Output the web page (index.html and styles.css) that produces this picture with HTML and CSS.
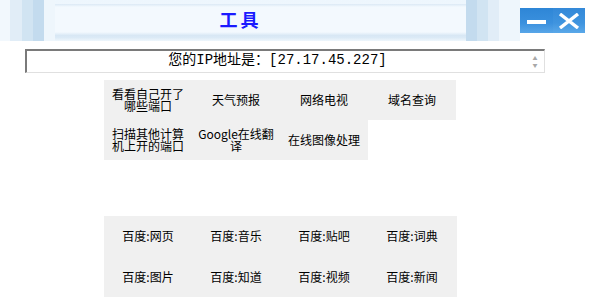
FILE: index.html
```html
<!DOCTYPE html>
<html lang="zh-CN">
<head>
  <meta charset="UTF-8" />
  <title>工具</title>
  <link rel="stylesheet" href="styles.css">
</head>
<body>
  <div class="top">
    <div class="title-bar">
      <div class="title-panel">工具</div>
    </div>
    <div class="win-btns">
      <span class="btn-min"><svg width="20" height="6" viewBox="0 0 20 6"><rect x="0" y="1" width="19" height="4" fill="#fff"/></svg></span>
      <span class="btn-close"><svg width="22" height="16" viewBox="0 0 22 16"><path d="M2 1 L20 15 M20 1 L2 15" stroke="#fff" stroke-width="3.4"/></svg></span>
    </div>
  </div>

  <div class="ip-box">
    <div class="ip-text">您的IP地址是：[27.17.45.227]</div>
    <div class="scroll">
      <span class="arr">▲</span>
      <span class="arr">▼</span>
    </div>
  </div>

  <div class="tools">
    <a class="cell">看看自己开了哪些端口</a>
    <a class="cell">天气预报</a>
    <a class="cell">网络电视</a>
    <a class="cell">域名查询</a>
    <a class="cell">扫描其他计算机上开的端口</a>
    <a class="cell">Google在线翻译</a>
    <a class="cell">在线图像处理</a>
  </div>

  <div class="tools baidu">
    <a class="cell">百度:网页</a>
    <a class="cell">百度:音乐</a>
    <a class="cell">百度:贴吧</a>
    <a class="cell">百度:词典</a>
    <a class="cell">百度:图片</a>
    <a class="cell">百度:知道</a>
    <a class="cell">百度:视频</a>
    <a class="cell">百度:新闻</a>
  </div>
</body>
</html>
```

FILE: styles.css
```css
* {
  margin: 0;
  padding: 0;
  box-sizing: border-box;
}

body {
  width: 594px;
  height: 307px;
  background: #fff;
  font-family: "Noto Sans CJK SC", "DejaVu Sans", sans-serif;
  color: #000;
  overflow: hidden;
}

.top {
  display: flex;
  align-items: flex-start;
  height: 41px;
}

.title-bar {
  width: 520px;
  height: 41px;
  padding: 4px 54px 5px 55px;
  background:
    linear-gradient(90deg,
      #f2f8fd 0px, #f2f8fd 10px,
      #e1edf7 10px, #e1edf7 22px,
      #d1e4f2 22px, #d1e4f2 33px,
      #c3dbee 33px, #c3dbee 44px,
      #eef6fc 44px, #eef6fc 55px,
      transparent 55px, transparent 466px,
      #c3dbee 466px, #c3dbee 477px,
      #d1e4f2 477px, #d1e4f2 488px,
      #e1edf7 488px, #e1edf7 499px,
      #eef6fc 499px, #eef6fc 520px),
    linear-gradient(180deg, #edf6fd 0%, #f4f9fe 70%, #d8e8f5 90%, #eef6fc 100%);
}

.title-panel {
  height: 32px;
  background: linear-gradient(180deg, #dbe9f5 0px, #f3f9fe 3px, #f3f9fe 28px, #d4e5f3 32px);
  text-align: center;
  padding-right: 40px;
  font-size: 18px;
  line-height: 30px;
  font-weight: bold;
  color: #1a1aff;
  letter-spacing: 3px;
}

.win-btns {
  display: flex;
  margin-top: 8px;
  height: 25px;
}

.btn-min, .btn-close {
  display: flex;
  align-items: center;
  justify-content: center;
  height: 25px;
  background: linear-gradient(180deg, #2e86d6 0%, #3a90de 60%, #58a6e8 100%);
}

.btn-min {
  width: 33px;
  padding-top: 2px;
}

.btn-close {
  width: 32px;
  background: linear-gradient(180deg, #3489d8 0%, #3f94df 60%, #5aa8e9 100%);
}

.ip-box {
  display: flex;
  width: 520px;
  height: 24px;
  margin: 8px 0 0 25px;
  border-top: 2px solid #7a7a7a;
  border-left: 2px solid #7a7a7a;
  border-right: 1px solid #e0e0e0;
  border-bottom: 1px solid #e0e0e0;
}

.ip-text {
  flex: 1;
  text-align: center;
  font-family: "Liberation Mono", "Noto Sans CJK SC", monospace;
  font-size: 14px;
  line-height: 19px;
  padding-left: 2px;
}

.scroll {
  width: 18px;
  display: flex;
  flex-direction: column;
  align-items: center;
  justify-content: center;
  gap: 1px;
}

.arr {
  font-size: 5px;
  line-height: 6px;
  color: #a8a8a8;
}

.tools {
  display: grid;
  grid-template-columns: repeat(4, 88px);
  grid-auto-rows: 40px;
  margin: 7px 0 0 104px;
  width: 353px;
}

.tools.baidu {
  margin-top: 56px;
  grid-auto-rows: 40.5px;
  background: #f0f0f0;
}

.cell {
  display: flex;
  align-items: center;
  justify-content: center;
  padding: 0 5px;
  background: #f0f0f0;
  text-align: center;
  font-size: 12px;
  line-height: 12px;
  color: #000;
}
```
